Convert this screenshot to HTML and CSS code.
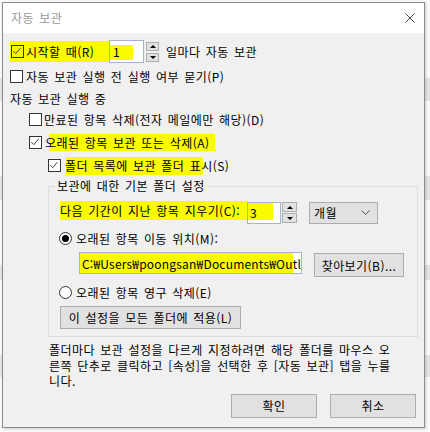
FILE: index.html
```html
<!DOCTYPE html>
<html lang="ko">
<head>
<meta charset="utf-8">
<title>자동 보관</title>
<link rel="stylesheet" href="styles.css">
</head>
<body>
<div class="dlg">
  <div class="titlebar">
    <span class="title">자동 보관</span>
    <svg class="close" width="10" height="10" viewBox="0 0 10 10"><path d="M0.5 0.5 L9.5 9.5 M9.5 0.5 L0.5 9.5" stroke="#4a4a4a" stroke-width="1" fill="none"/></svg>
  </div>
  <div class="content">
    <div class="row r1">
      <span class="hl1"><span class="cb clear"><svg viewBox="0 0 13 13" width="11" height="11"><path d="M1.5 6 L4.5 9 L10 2.5" stroke="#333" stroke-width="1.1" fill="none"/></svg></span><span class="lbl1">시작할 때(R)</span></span>
      <span class="edit e1"><span class="etxt">1</span></span>
      <span class="spin s1"><span class="sb"><i class="up"></i></span><span class="sb"><i class="dn"></i></span></span>
      <span class="after1">일마다 자동 보관</span>
    </div>
    <div class="row r2">
      <span class="cb"></span><span class="lbl2">자동 보관 실행 전 실행 여부 묻기(P)</span>
    </div>
    <div class="row r3">자동 보관 실행 중</div>
    <div class="row r4">
      <span class="cb"></span><span class="lbl4">만료된 항목 삭제(전자 메일에만 해당)(D)</span>
    </div>
    <div class="row r5">
      <span class="cb"><svg viewBox="0 0 13 13" width="11" height="11"><path d="M1.5 6 L4.5 9 L10 2.5" stroke="#333" stroke-width="1.1" fill="none"/></svg></span><span class="lbl5">오래된 항목 보관 또는 삭제(A)</span>
    </div>
    <div class="row r6">
      <span class="cb"><svg viewBox="0 0 13 13" width="11" height="11"><path d="M1.5 6 L4.5 9 L10 2.5" stroke="#333" stroke-width="1.1" fill="none"/></svg></span><span class="lbl6">폴더 목록에 보관 폴더 표시(S)</span>
    </div>
    <div class="group">
      <div class="legend">보관에 대한 기본 폴더 설정</div>
      <div class="row rc">
        <span class="lblc">다음 기간이 지난 항목 지우기(C):</span>
        <span class="edit e3"><span class="etxt">3</span></span>
        <span class="spin s3"><span class="sb"><i class="up"></i></span><span class="sb"><i class="dn"></i></span></span>
        <span class="combo"><span>개월</span><svg width="9" height="5" viewBox="0 0 9 5"><path d="M0.5 0.5 L4.5 4.5 L8.5 0.5" stroke="#555" stroke-width="1" fill="none"/></svg></span>
      </div>
      <div class="row rr1">
        <span class="radio on"><i></i></span><span class="rlbl">오래된 항목 이동 위치(M):</span>
      </div>
      <div class="row rpath">
        <span class="path"><span class="ptxt">C:₩Users₩poongsan₩Documents₩Outlc</span></span>
        <span class="btn browse">찾아보기(B)...</span>
      </div>
      <div class="row rr2">
        <span class="radio"></span><span class="rlbl">오래된 항목 영구 삭제(E)</span>
      </div>
      <div class="row rapply">
        <span class="btn apply">이 설정을 모든 폴더에 적용(L)</span>
      </div>
    </div>
    <p class="note">폴더마다 보관 설정을 다르게 지정하려면 해당 폴더를 마우스 오<br>른쪽 단추로 클릭하고 [속성]을 선택한 후 [자동 보관] 탭을 누를<br>니다.</p>
    <div class="btns">
      <span class="btn ok">확인</span>
      <span class="btn cancel">취소</span>
    </div>
  </div>
</div>
</body>
</html>
```
FILE: styles.css
```css
* { box-sizing: border-box; }
html, body { margin: 0; }
body {
  width: 430px;
  height: 432px;
  overflow: hidden;
  padding: 2px 0 0 2px;
  font-family: "Noto Sans CJK KR", "Noto Sans", sans-serif;
  font-size: 12px;
  letter-spacing: 0.45px;
  word-spacing: 1.5px;
  color: #000;
  background: linear-gradient(to bottom,
    #fbfbfb 0 78px, #e6e6e6 78px 101px, #fbfbfb 101px 176px,
    #e6e6e6 176px 200px, #fbfbfb 200px 265px, #e6e6e6 265px 280px,
    #fbfbfb 280px 355px, #e6e6e6 355px 377px, #fbfbfb 377px);
}
.dlg {
  width: 423px;
  height: 426px;
  border: 1px solid #8c8c8c;
  background: #f0f0f0;
  box-shadow: 1px 1px 3px rgba(0,0,0,0.2);
}
.titlebar {
  height: 30px;
  background: #fff;
  display: flex;
  align-items: center;
  justify-content: space-between;
  padding: 0 9px 0 8px;
}
.title { color: #9a9a9a; line-height: 16px; }
.close { display: block; }

.content { padding: 7px 0 0 7px; }
.row { display: flex; align-items: center; white-space: nowrap; }

.cb {
  width: 13px; height: 13px;
  border: 1px solid #333;
  background: #fff;
  display: flex; align-items: center; justify-content: center;
  flex: none;
}
.cb.clear { background: transparent; }
.cb svg { display: block; }

.r1 { height: 23px; }
.hl1 {
  width: 99px; height: 21px;
  background: #fafa00;
  display: flex; align-items: center;
  padding-left: 1px;
}
.lbl1 { margin-left: 2px; }
.edit {
  background: #fff;
  border: 1px solid #a6b5cc;
  display: flex; align-items: center;
  flex: none;
}
.e1 { width: 35px; height: 23px; padding-left: 3px;
  background: linear-gradient(#fafa00, #fafa00) no-repeat 0 4px / 23px 15px, #fff; }
.etxt { line-height: 16px; }
.spin { display: flex; flex-direction: column; flex: none; }
.sb {
  background: #e1e1e1;
  border: 1px solid #adadad;
  display: flex; align-items: center; justify-content: center;
}
.up, .dn { display: block; width: 0; height: 0; border-left: 3px solid transparent; border-right: 3px solid transparent; }
.up { border-bottom: 3px solid #000; }
.dn { border-top: 3px solid #000; }
.s1 { margin-left: 2px; width: 13px; gap: 2px; }
.s1 .sb { height: 9px; }
.after1 { margin-left: 7px; }

.r2 { margin-top: 2px; height: 23px; }
.lbl2 { margin-left: 3px; }
.r3 { height: 21px; }
.r4 { height: 21px; padding-left: 19px; }
.lbl4 { margin-left: 2px; }
.r5 { margin-top: 1px; height: 23px; padding-left: 19px; }
.lbl5 {
  margin-left: 3px;
  padding: 0 6px 0 0;
  line-height: 17px;
  background: linear-gradient(#fafa00, #fafa00) no-repeat 4px 0 / 100% 100%;
}
.r6 { height: 23px; padding-left: 38px; }
.lbl6 {
  margin-left: 4px;
  line-height: 18px;
  background: linear-gradient(#fafa00, #fafa00) no-repeat 1px 0 / 137px 100%;
}

.group {
  margin: 9px 0 0 38px;
  width: 370px;
  border: 1px solid #dcdcdc;
  padding: 0 0 7px 11px;
}
.legend {
  width: max-content;
  margin: -9px 0 0 -5px;
  padding: 0 3px 0 2px;
  line-height: 16px;
  background: #f0f0f0;
}
.rc { margin-top: 7px; height: 23px; }
.lblc {
  width: 187px;
  line-height: 19px;
  align-self: flex-start;
  background: #fafa00;
}
.e3 { width: 34px; height: 22px; padding-left: 2px;
  background: linear-gradient(#fafa00, #fafa00) no-repeat 0 0 / 25px 17px, #fff; }
.s3 { margin-left: 1px; width: 15px; gap: 1px; }
.s3 .sb { height: 10px; }
.combo {
  margin-left: 12px;
  width: 69px; height: 22px;
  background: #e1e1e1;
  border: 1px solid #adadad;
  display: flex; align-items: center; justify-content: space-between;
  padding: 0 7px 0 4px;
}
.combo svg { display: block; }

.rr1 { margin-top: 4px; height: 21px; margin-left: -1px; }
.radio {
  width: 13px; height: 13px;
  border: 1px solid #333;
  border-radius: 50%;
  background: #fff;
  display: flex; align-items: center; justify-content: center;
  flex: none;
}
.radio i { display: block; width: 7px; height: 7px; border-radius: 50%; background: #000; }
.rlbl { margin-left: 4px; }

.rpath { margin-top: 3px; padding-left: 19px; align-items: flex-start; height: 25px; }
.path {
  width: 223px; height: 22px;
  background: linear-gradient(#fafa00, #fafa00) no-repeat 0 0 / 213px 100%, #fff;
  border: 1px solid #a6b5cc;
  overflow: hidden;
  display: flex; align-items: center;
  padding-left: 2px;
}
.ptxt { letter-spacing: 0.2px; }
.btn {
  background: #e1e1e1;
  border: 1px solid #adadad;
  display: flex; align-items: center; justify-content: center;
  flex: none;
}
.browse { margin-left: 12px; margin-top: 1px; width: 90px; height: 24px; }
.rr2 { margin-top: 4px; height: 22px; margin-left: -1px; }
.rapply { margin-top: 3px; }
.apply { width: 181px; height: 23px; }

.note {
  margin: 5px 0 0 39px;
  line-height: 15.5px;
  white-space: nowrap;
}
.btns {
  margin-top: 5px;
  display: flex;
  justify-content: flex-end;
  gap: 13px;
  padding-right: 8px;
}
.ok, .cancel { width: 86px; height: 24px; }
```
